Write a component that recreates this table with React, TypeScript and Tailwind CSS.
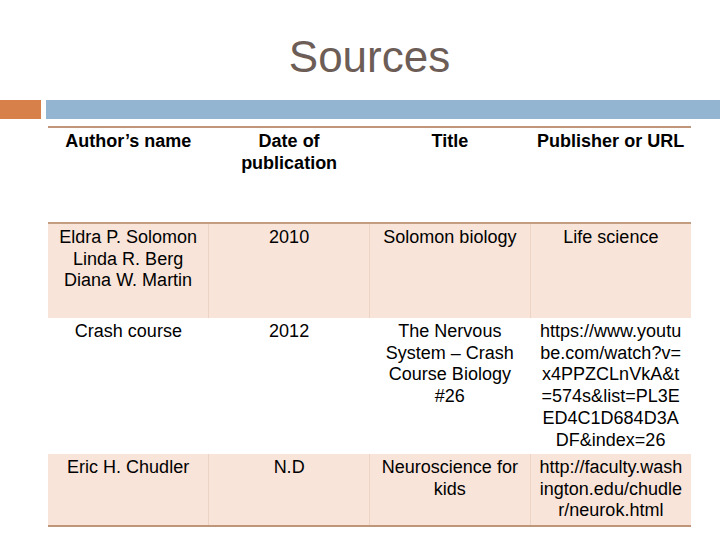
const rows = [
  {
    author: ['Eldra P. Solomon', 'Linda R. Berg', 'Diana W. Martin'],
    date: '2010',
    title: ['Solomon biology'],
    url: ['Life science'],
    h: 'h-[95px]',
    shaded: true,
  },
  {
    author: ['Crash course'],
    date: '2012',
    title: ['The Nervous', 'System – Crash', 'Course Biology', '#26'],
    url: ['https://www.youtu', 'be.com/watch?v=', 'x4PPZCLnVkA&t', '=574s&list=PL3E', 'ED4C1D684D3A', 'DF&index=26'],
    h: 'h-[136px]',
    shaded: false,
  },
  {
    author: ['Eric H. Chudler'],
    date: 'N.D',
    title: ['Neuroscience for', 'kids'],
    url: ['http://faculty.wash', 'ington.edu/chudle', 'r/neurok.html'],
    h: 'h-[72px]',
    shaded: true,
  },
]

function Lines({ items }: { items: string[] }) {
  return (
    <>
      {items.map((t, i) => (
        <div key={i} className="whitespace-nowrap">
          {t}
        </div>
      ))}
    </>
  )
}

export default function App() {
  const cell = 'align-top px-0 pt-[3px] text-center'
  return (
    <div className="relative h-[540px] w-[720px] overflow-hidden bg-white font-['Liberation_Sans',Arial,sans-serif] text-black">
      <h1 className="pl-[19px] pt-[31px] text-center text-[44px] leading-[52px] text-[#6d5d57]">Sources</h1>

      <div className="mt-[17px] flex h-[19px] gap-[5px]">
        <div className="w-[41px] bg-[#d8804a]" />
        <div className="flex-1 bg-[#94b5d1]" />
      </div>

      <table className="ml-[48px] mt-[7px] w-[643px] table-fixed border-collapse text-[18px] leading-[21.7px]">
        <thead>
          <tr className="h-[96px] border-t-2 border-[#bf967a]">
            <th className={cell}>Author’s name</th>
            <th className={cell}>
              Date of
              <br />
              publication
            </th>
            <th className={cell}>Title</th>
            <th className={cell}>Publisher or URL</th>
          </tr>
        </thead>
        <tbody>
          {rows.map((r, i) => (
            <tr
              key={i}
              className={`${r.h} ${r.shaded ? 'bg-[#f8e4d9]' : 'bg-white'} ${i === 0 ? 'border-t-2 border-[#c49c80]' : ''} ${i === rows.length - 1 ? 'border-b-2 border-[#bf967a]' : ''}`}
            >
              <td className={`${cell} ${r.shaded ? 'border-r border-[#ecd3c4]' : ''}`}>
                <Lines items={r.author} />
              </td>
              <td className={`${cell} ${r.shaded ? 'border-r border-[#ecd3c4]' : ''}`}>{r.date}</td>
              <td className={`${cell} ${r.shaded ? 'border-r border-[#ecd3c4]' : ''}`}>
                <Lines items={r.title} />
              </td>
              <td className={cell}>
                <Lines items={r.url} />
              </td>
            </tr>
          ))}
        </tbody>
      </table>
    </div>
  )
}
